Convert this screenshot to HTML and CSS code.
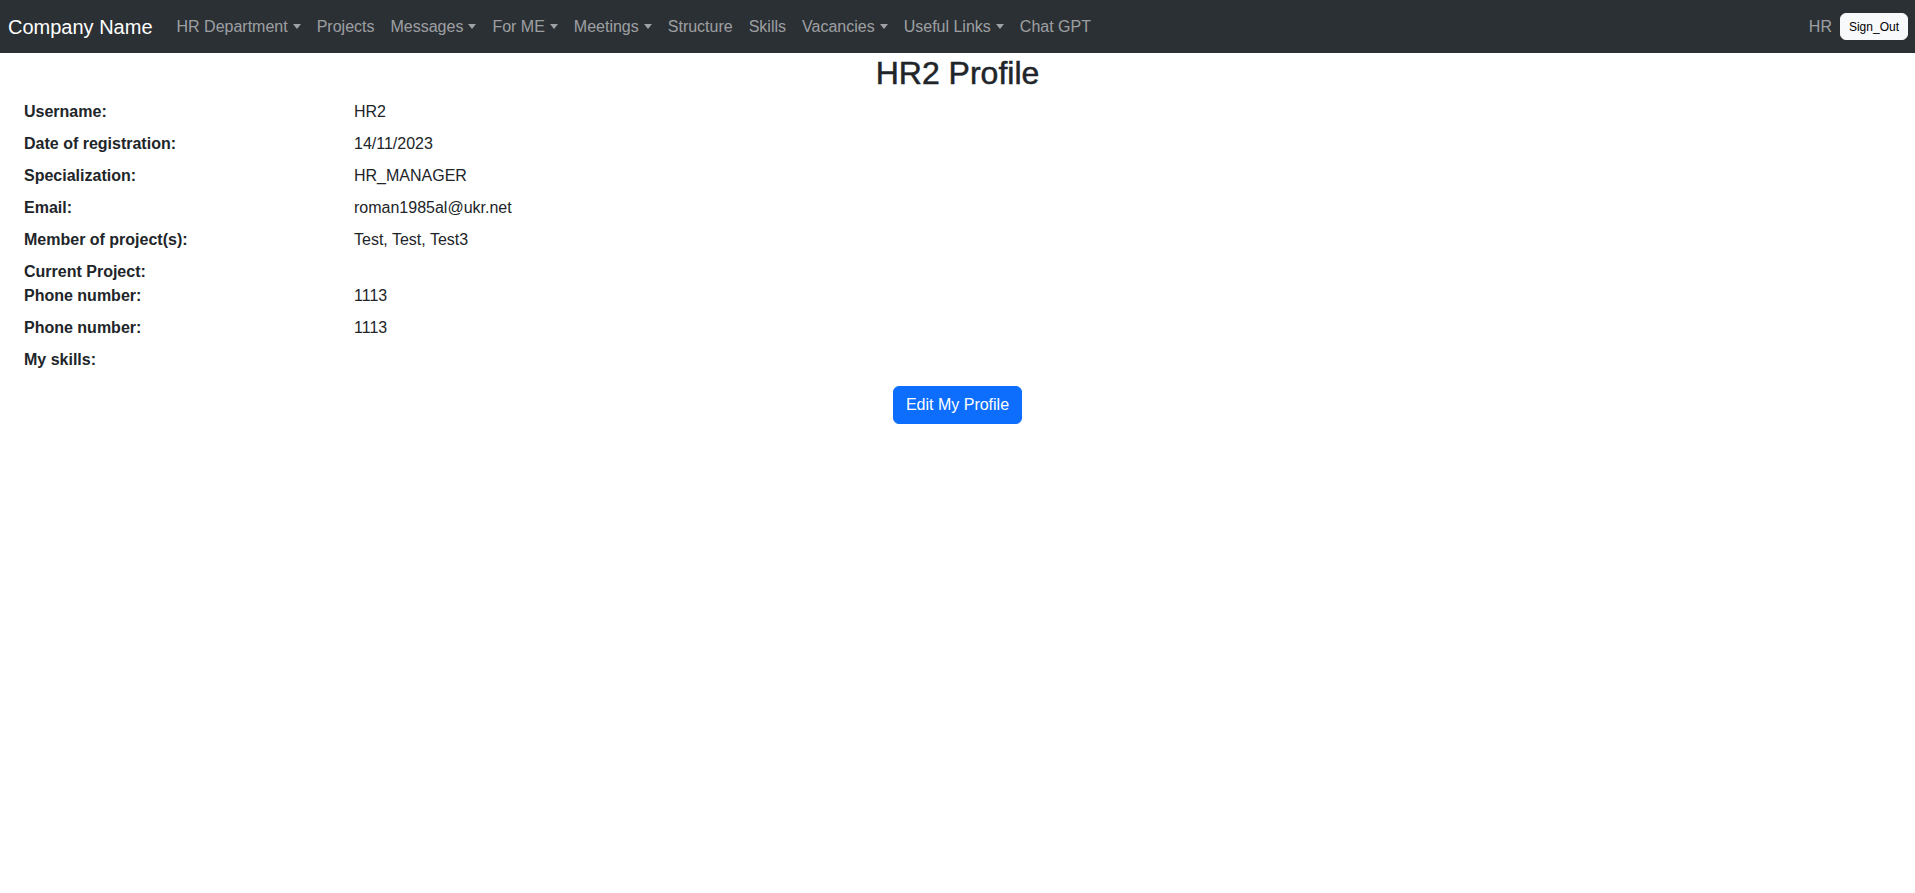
FILE: index.html
```html
<!DOCTYPE html>
<html lang="en">
<head>
<meta charset="utf-8">
<title>HR2 Profile</title>
<link rel="stylesheet" href="styles.css">
</head>
<body>
<nav class="navbar">
  <a class="brand" href="#">Company Name</a>
  <ul class="nav-list">
    <li><a class="nav-link dropdown" href="#">HR Department</a></li>
    <li><a class="nav-link" href="#">Projects</a></li>
    <li><a class="nav-link dropdown" href="#">Messages</a></li>
    <li><a class="nav-link dropdown" href="#">For ME</a></li>
    <li><a class="nav-link dropdown" href="#">Meetings</a></li>
    <li><a class="nav-link" href="#">Structure</a></li>
    <li><a class="nav-link" href="#">Skills</a></li>
    <li><a class="nav-link dropdown" href="#">Vacancies</a></li>
    <li><a class="nav-link dropdown" href="#">Useful Links</a></li>
    <li><a class="nav-link" href="#">Chat GPT</a></li>
  </ul>
  <div class="nav-right">
    <span class="nav-link">HR</span>
    <button class="btn-signout" type="button">Sign_Out</button>
  </div>
</nav>
<main class="content">
  <h2 class="title">HR2 Profile</h2>
  <div class="info">
    <div class="row"><div class="label">Username:</div><div class="value">HR2</div></div>
    <div class="row"><div class="label">Date of registration:</div><div class="value">14/11/2023</div></div>
    <div class="row"><div class="label">Specialization:</div><div class="value">HR_MANAGER</div></div>
    <div class="row"><div class="label">Email:</div><div class="value">roman1985al@ukr.net</div></div>
    <div class="row"><div class="label">Member of project(s):</div><div class="value">Test, Test, Test3</div></div>
    <div class="row tight"><div class="label">Current Project:</div><div class="value"></div></div>
    <div class="row"><div class="label">Phone number:</div><div class="value">1113</div></div>
    <div class="row"><div class="label">Phone number:</div><div class="value">1113</div></div>
    <div class="row"><div class="label">My skills:</div><div class="value"></div></div>
  </div>
  <div class="actions">
    <button class="btn-primary" type="button">Edit My Profile</button>
  </div>
</main>
</body>
</html>
```

FILE: styles.css
```css
* { box-sizing: border-box; }
html, body { margin: 0; padding: 0; }
body {
  font-family: "Liberation Sans", Arial, sans-serif;
  font-size: 16px;
  line-height: 24px;
  color: #212529;
  background: #fff;
}
a { text-decoration: none; }

.navbar {
  height: 53px;
  background: #2b3035;
  display: flex;
  align-items: center;
  padding: 0 7px 0 8px;
}
.brand {
  font-size: 20px;
  line-height: 30px;
  color: #fff;
  margin-right: 16px;
  white-space: nowrap;
}
.nav-list {
  list-style: none;
  margin: 0;
  padding: 0;
  display: flex;
  align-items: center;
}
.nav-link {
  display: block;
  padding: 8px;
  color: rgba(255, 255, 255, 0.55);
  white-space: nowrap;
}
.dropdown::after {
  content: "";
  display: inline-block;
  margin-left: 5px;
  vertical-align: 3px;
  border-top: 5px solid;
  border-right: 4px solid transparent;
  border-left: 4px solid transparent;
}
.nav-right {
  margin-left: auto;
  display: flex;
  align-items: center;
}
.btn-signout {
  font-family: "Liberation Sans", Arial, sans-serif;
  font-size: 12px;
  height: 27px;
  padding: 0 8px;
  border: 1px solid #f8f9fa;
  border-radius: 6px;
  background: #f8f9fa;
  color: #000;
}

.title {
  margin: 1px 0 8px;
  font-size: 32px;
  line-height: 38px;
  font-weight: 500;
  text-align: center;
  -webkit-text-stroke: 0.5px #212529;
}
.info {
  padding: 0 24px;
}
.row {
  display: grid;
  grid-template-columns: 330px 1fr;
  margin-bottom: 8px;
}
.row.tight { margin-bottom: 0; }
.label { font-weight: 700; }
.actions {
  display: flex;
  justify-content: center;
  margin-top: 14px;
}
.btn-primary {
  font-family: "Liberation Sans", Arial, sans-serif;
  font-size: 16px;
  line-height: 24px;
  padding: 6px 12px;
  border: 1px solid #0d6efd;
  border-radius: 6px;
  background: #0d6efd;
  color: #fff;
}
```
